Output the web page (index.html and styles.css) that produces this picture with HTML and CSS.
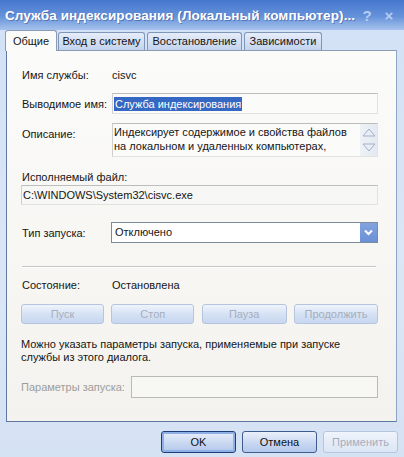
FILE: index.html
```html
<!DOCTYPE html>
<html lang="ru">
<head>
<meta charset="utf-8">
<title>Служба индексирования</title>
<link rel="stylesheet" href="styles.css">
</head>
<body>
<div class="window">
  <div class="titlebar">
    <span class="title">Служба индексирования (Локальный компьютер)...</span>
    <span class="tb-btn help">?</span>
    <span class="tb-btn close">×</span>
  </div>
  <div class="tabs">
    <div class="tab active t1">Общие</div>
    <div class="tab t2">Вход в систему</div>
    <div class="tab t3">Восстановление</div>
    <div class="tab t4">Зависимости</div>
  </div>
  <div class="panel">
    <div class="row r-name">
      <span class="label">Имя службы:</span>
      <span class="value">cisvc</span>
    </div>
    <div class="row r-display">
      <span class="label">Выводимое имя:</span>
      <div class="field display"><span class="sel">Служба индексирования</span></div>
    </div>
    <div class="row r-desc">
      <span class="label desc-label">Описание:</span>
      <div class="field desc">
        <div class="desc-text">Индексирует содержимое и свойства файлов<br>на локальном и удаленных компьютерах,</div>
        <div class="scroll">
          <svg width="16" height="12" viewBox="0 0 16 12"><path d="M2 10 L8 3 L14 10 Z" fill="none" stroke="#a4b1c8" stroke-width="1"/></svg>
          <svg width="16" height="12" viewBox="0 0 16 12"><path d="M2 2 L8 9 L14 2 Z" fill="none" stroke="#a4b1c8" stroke-width="1"/></svg>
        </div>
      </div>
    </div>
    <div class="row r-exe-label">Исполняемый файл:</div>
    <div class="field path">C:\WINDOWS\System32\cisvc.exe</div>
    <div class="row r-start">
      <span class="label">Тип запуска:</span>
      <div class="combo">
        <span class="combo-text">Отключено</span>
        <span class="combo-btn">
          <svg width="9" height="7" viewBox="0 0 9 7"><path d="M1 1.5 L4.5 5 L8 1.5" fill="none" stroke="#fff" stroke-width="2"/></svg>
        </span>
      </div>
    </div>
    <div class="separator"></div>
    <div class="row r-status">
      <span class="label">Состояние:</span>
      <span class="value">Остановлена</span>
    </div>
    <div class="row r-buttons">
      <button class="btn dis b-start">Пуск</button>
      <button class="btn dis b-stop">Стоп</button>
      <button class="btn dis b-pause">Пауза</button>
      <button class="btn dis b-cont">Продолжить</button>
    </div>
    <p class="hint">Можно указать параметры запуска, применяемые при запуске<br>службы из этого диалога.</p>
    <div class="row r-params">
      <span class="label params-label">Параметры запуска:</span>
      <div class="field params"></div>
    </div>
  </div>
  <div class="footer">
    <button class="btn fbtn default">OK</button>
    <button class="btn fbtn">Отмена</button>
    <button class="btn fbtn dis">Применить</button>
  </div>
</div>
</body>
</html>
```

FILE: styles.css
```css
* { box-sizing: border-box; }
body {
  margin: 0;
  width: 404px;
  height: 457px;
  overflow: hidden;
  font-family: "Liberation Sans", Arial, sans-serif;
  font-size: 11px;
  color: #151515;
}
.window {
  height: 457px;
  display: flex;
  flex-direction: column;
  background: linear-gradient(#d2e1f6, #dbe6f5 60%, #d5e2f4);
}
.titlebar {
  height: 30px;
  flex: none;
  display: flex;
  align-items: center;
  padding: 0 4px 0 5px;
  background: linear-gradient(#4677cf, #6592da 55%, #a7c3ec 100%);
  color: #fff;
}
.title {
  flex: 1;
  font-weight: bold;
  font-size: 13.5px;
  white-space: nowrap;
  text-shadow: 1px 1px 0 rgba(20, 40, 100, 0.35);
  letter-spacing: 0.1px;
}
.tb-btn {
  width: 22px;
  text-align: center;
  color: #b8cdf2;
  font-weight: bold;
  font-size: 15px;
}
.tabs {
  height: 20px;
  flex: none;
  display: flex;
  align-items: flex-end;
  padding-left: 5px;
  position: relative;
  z-index: 1;
}
.tab {
  height: 18px;
  line-height: 17px;
  text-align: center;
  border: 1px solid #8096b8;
  border-bottom: none;
  border-radius: 3px 3px 0 0;
  background: linear-gradient(#e6edf9, #c3d3ee);
  margin-right: 1px;
  white-space: nowrap;
}
.tab.active {
  height: 21px;
  line-height: 21px;
  margin-bottom: -1px;
  background: #fbfbf9;
  border-color: #8a9bb6;
}
.t1 { width: 52px; }
.t2 { width: 87px; }
.t3 { width: 95px; margin-left: 1px; }
.t4 { width: 78px; margin-left: 1px; }

.panel {
  flex: none;
  margin-left: 6px;
  width: 391px;
  height: 372px;
  border: 1px solid #5e78a2;
  border-top-color: #8a9bb6;
  border-right-color: #8fa5c6;
  background: linear-gradient(#fbfbfa, #f6f5f1 70%, #f3f2ee);
  padding: 0 18px 0 15px;
  display: flex;
  flex-direction: column;
}
.row { display: flex; align-items: center; }
.label { width: 90px; flex: none; white-space: nowrap; }
.value { white-space: nowrap; }

.r-name { margin-top: 16px; height: 16px; }
.r-display { margin-top: 10px; height: 21px; }
.field {
  border: 1px solid #e2e2e0;
  border-top-color: #bdbdbd;
  border-left-color: #cfcfcf;
}
.display {
  flex: 1;
  height: 21px;
  padding: 3px 0 0 1px;
  background: #fbfbfa;
}
.sel {
  background: #3468c2;
  color: #fff;
  padding: 0 1px;
  line-height: 14px;
  display: inline-block;
}
.r-desc { margin-top: 9px; height: 34px; align-items: flex-start; }
.desc-label { margin-top: 5px; }
.desc {
  flex: 1;
  height: 34px;
  display: flex;
  background: #fbfbfa;
}
.desc-text {
  flex: 1;
  padding: 1px 0 0 1px;
  line-height: 14px;
  white-space: nowrap;
  overflow: hidden;
}
.scroll {
  width: 17px;
  flex: none;
  background: linear-gradient(90deg, #eef1f6, #e4e9f2);
  display: flex;
  flex-direction: column;
  align-items: center;
  justify-content: space-around;
}
.scroll svg { display: block; }
.r-exe-label { margin-top: 12px; height: 16px; }
.path {
  height: 20px;
  margin-left: -1px;
  line-height: 18px;
  padding-left: 1px;
  background: #f7f7f5;
  white-space: nowrap;
}
.r-start { margin-top: 17px; height: 21px; }
.r-start .label { width: 89px; }
.combo {
  flex: 1;
  height: 21px;
  border: 1px solid #7d8a9e;
  background: #fff;
  display: flex;
}
.combo-text { flex: 1; line-height: 19px; padding-left: 3px; }
.combo-btn {
  width: 17px;
  height: 19px;
  background: linear-gradient(#82a3de, #6a90d5);
  display: flex;
  align-items: center;
  justify-content: center;
}
.combo-btn svg { display: block; }
.separator {
  margin-top: 23px;
  height: 2px;
  border-top: 1px solid #c7c7c5;
  border-bottom: 1px solid #ffffff;
  margin-right: 2px;
}
.r-status { margin-top: 9px; height: 16px; }
.r-buttons {
  margin-top: 11px;
  height: 20px;
  margin-left: -1px;
  justify-content: space-between;
}
.btn {
  font-family: inherit;
  font-size: 11px;
  height: 20px;
  padding: 0;
  border: 1px solid #b6c5de;
  border-radius: 3px;
  background: linear-gradient(#f0f4fb, #d6e2f4 50%, #c7d7f0);
  color: #a6aebe;
}
.b-start { width: 83px; }
.b-stop { width: 83px; }
.b-pause { width: 85px; }
.b-cont { width: 84px; }
.hint {
  margin: 14px 0 0 -1px;
  line-height: 13px;
  height: 26px;
}
.r-params { margin-top: 12px; height: 22px; }
.params-label { width: 110px; color: #9d9d9d; margin-left: -1px; }
.params {
  flex: 1;
  height: 22px;
  border: 1px solid #b9b9b7;
  background: #f7f7f4;
}
.footer {
  margin-top: 9px;
  display: flex;
  justify-content: flex-end;
  padding-right: 6px;
  gap: 6px;
}
.fbtn {
  width: 75px;
  height: 22px;
  color: #111;
  border-color: #3f5c8e;
  background: linear-gradient(#eaf0fb, #c9d8f1 55%, #b4c8ec);
}
.fbtn.default {
  border-color: #1f3e78;
  box-shadow: inset 0 0 0 2px #8fb0e6;
}
.fbtn.dis {
  color: #a6aebe;
  border-color: #b6c5de;
  background: linear-gradient(#f0f4fb, #dbe5f5);
}
```
